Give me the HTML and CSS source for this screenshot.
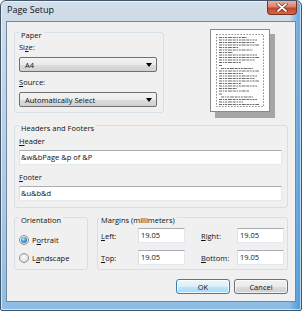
FILE: index.html
```html
<!DOCTYPE html>
<html lang="en">
<head>
  <meta charset="UTF-8" />
  <title>Page Setup</title>
  <link rel="stylesheet" href="styles.css">
</head>
<body>
  <div class="window">
    <div class="titlebar">
      <span class="title">Page Setup</span>
      <div class="close">
        <svg width="12" height="9" viewBox="0 0 12 9">
          <path d="M2 1 L10 8 M10 1 L2 8" stroke="#6b2a1d" stroke-width="3.2" stroke-linecap="round"/>
          <path d="M2 1 L10 8 M10 1 L2 8" stroke="#fff" stroke-width="1.7" stroke-linecap="round"/>
        </svg>
      </div>
    </div>

    <div class="client">
      <div class="top-row">
        <fieldset class="group paper">
          <legend>Paper</legend>
          <div class="field-label">Si<u>z</u>e:</div>
          <div class="combo">
            <span>A4</span>
            <svg width="6" height="4" viewBox="0 0 6 4"><path d="M0 0 H6 L3 4 Z" fill="#000"/></svg>
          </div>
          <div class="field-label"><u>S</u>ource:</div>
          <div class="combo">
            <span>Automatically Select</span>
            <svg width="6" height="4" viewBox="0 0 6 4"><path d="M0 0 H6 L3 4 Z" fill="#000"/></svg>
          </div>
        </fieldset>

        <div class="preview">
          <svg width="65" height="90" viewBox="0 0 65 90">
            <rect x="5" y="5" width="60" height="84" fill="#a6a6a6"/>
            <rect x="0.5" y="0.5" width="59" height="82" fill="#fff" stroke="#8a8a8a"/>
            <rect x="6.5" y="5.5" width="47" height="72" fill="none" stroke="#777" stroke-dasharray="1.3 1.7"/>
            <g stroke="#6a6a6a" stroke-width="1" stroke-dasharray="3 0.8 1.5 0.8 2 0.8 4 0.8">
              <path d="M9 8.5h28 M9 11h38 M9 13.5h36 M9 16h40 M9 18.5h20 M9 21h34 M9 23.5h14 M9 26h38 M9 28.5h40 M9 31h36 M9 33.5h22"/>
              <path d="M9 36.5h3"/>
              <path d="M11 39.5h32 M9 42h40 M9 44.5h24 M9 47h38 M9 49.5h36 M9 52h40 M9 54.5h22 M9 57h38 M9 59.5h18 M9 62h30"/>
              <path d="M9 65h3"/>
              <path d="M11 68h32 M9 70.5h38 M9 73h24 M9 75.5h40"/>
            </g>
          </svg>
        </div>
      </div>

      <fieldset class="group headers">
        <legend>Headers and Footers</legend>
        <div class="field-label"><u>H</u>eader</div>
        <div class="textbox wide">&amp;w&amp;bPage &amp;p of &amp;P</div>
        <div class="field-label footer-label"><u>F</u>ooter</div>
        <div class="textbox wide">&amp;u&amp;b&amp;d</div>
      </fieldset>

      <div class="bottom-row">
        <fieldset class="group orientation">
          <legend>Orientation</legend>
          <div class="radio-row first">
            <span class="radio checked"></span>
            <span>P<u>o</u>rtrait</span>
          </div>
          <div class="radio-row">
            <span class="radio"></span>
            <span>L<u>a</u>ndscape</span>
          </div>
        </fieldset>

        <fieldset class="group margins">
          <legend>Margins (millimeters)</legend>
          <div class="margin-grid">
            <span><u>L</u>eft:</span>
            <div class="textbox">19.05</div>
            <span><u>R</u>ight:</span>
            <div class="textbox">19.05</div>
            <span><u>T</u>op:</span>
            <div class="textbox">19.05</div>
            <span><u>B</u>ottom:</span>
            <div class="textbox">19.05</div>
          </div>
        </fieldset>
      </div>

      <div class="buttons">
        <button class="btn default">OK</button>
        <button class="btn">Cancel</button>
      </div>
    </div>
  </div>
</body>
</html>
```

FILE: styles.css
```css
body {
  margin: 0;
  font-family: "Open Sans", "Liberation Sans", sans-serif;
  font-size: 7.5px;
  color: #111;
}
u {
  text-decoration-thickness: 1px;
  text-underline-offset: 1px;
}
.window {
  width: 302px;
  height: 311px;
  box-sizing: border-box;
  border: 1px solid #42566b;
  border-radius: 6px 6px 2px 2px;
  background:
    linear-gradient(90deg, rgba(255,255,255,0) 96%, rgba(40,135,215,0.55) 99%),
    linear-gradient(180deg, #d2dee9 0, #c4d5e6 25%, #abc9e5 65%, #8cbde6 100%);
  box-shadow: inset 0 0 0 1px rgba(255,255,255,0.6);
  display: flex;
  flex-direction: column;
}
.titlebar {
  height: 20px;
  display: flex;
  justify-content: space-between;
  align-items: flex-start;
}
.title {
  font-size: 9px;
  line-height: 18px;
  padding-left: 6px;
  color: #111;
}
.close {
  width: 30px;
  height: 14px;
  margin-right: 4px;
  box-sizing: border-box;
  border: 1px solid #77301f;
  border-top: none;
  border-radius: 0 0 4px 4px;
  background: linear-gradient(180deg, #eab2a2 0, #d9826c 45%, #c3462a 55%, #d0674b 100%);
  display: flex;
  align-items: center;
  justify-content: center;
}
.client {
  margin: 0 5px 8px;
  flex: 1;
  background: #f0f0f0;
  border: 1px solid #71889f;
  padding: 6px 7px 0;
}

/* group boxes */
.group {
  margin: 0;
  min-width: 0;
  border: 1px solid #d5dfe5;
  border-radius: 3px;
  box-sizing: border-box;
}
.group legend {
  height: 9px;
  line-height: 14px;
  padding: 0 2px;
}
.field-label {
  height: 12px;
  line-height: 12px;
  margin-top: 4px;
}

.top-row {
  display: flex;
  align-items: flex-start;
}
.paper {
  width: 150px;
  padding: 0 6px 5px 4px;
}
.preview {
  margin-left: 46px;
  margin-top: 1px;
  height: 89px;
}
.preview svg {
  display: block;
}

.combo {
  margin-top: 4px;
  height: 15px;
  box-sizing: border-box;
  border: 1px solid #707070;
  border-radius: 2px;
  background: linear-gradient(180deg, #f3f3f3 0, #ebebeb 50%, #dddddd 51%, #d0d0d0 100%);
  display: flex;
  justify-content: space-between;
  align-items: center;
  padding: 0 4px 0 5px;
}

.headers {
  margin-top: 3px;
  padding: 0 5px 6px 4px;
}
.headers .field-label {
  margin-top: 5px;
}
.headers .footer-label {
  margin-top: 6px;
}
.textbox {
  height: 15px;
  box-sizing: border-box;
  background: #fff;
  border: 1px solid #e3e9ef;
  border-top-color: #abadb3;
  border-left-color: #dbdfe6;
  line-height: 13px;
  padding-left: 2px;
}
.textbox.wide {
  margin-top: 3px;
  padding-left: 1px;
}

.bottom-row {
  margin-top: 5px;
  display: flex;
  gap: 9px;
}
.orientation {
  width: 74px;
  padding: 0 4px 5px 4px;
}
.radio-row {
  height: 12px;
  margin-top: 6px;
  display: flex;
  align-items: center;
  gap: 3px;
}
.radio-row.first {
  margin-top: 12px;
}
.radio {
  width: 10px;
  height: 10px;
  box-sizing: border-box;
  border-radius: 50%;
  border: 1px solid #8f9090;
  background: radial-gradient(circle at 50% 40%, #fbfbfb, #d6d6d6);
  display: flex;
  align-items: center;
  justify-content: center;
}
.radio.checked::after {
  content: "";
  width: 6px;
  height: 6px;
  border-radius: 50%;
  background: radial-gradient(circle at 40% 35%, #b8ecff 0, #3c9be0 45%, #0f4d98 100%);
}
.margins {
  flex: 1;
  padding: 0 4px 4px 3px;
}
.margins legend {
  margin-left: -2px;
}
.margin-grid {
  margin-top: 6px;
  display: grid;
  grid-template-columns: 37px 47px 16px 36px 47px;
  grid-auto-rows: 15px;
  row-gap: 7px;
  align-items: center;
}
.margin-grid span:nth-child(3),
.margin-grid span:nth-child(7) {
  grid-column: 4;
}

.buttons {
  margin-top: 9px;
  display: flex;
  justify-content: flex-end;
  gap: 4px;
}
.btn {
  width: 54px;
  height: 15px;
  padding: 0;
  font: inherit;
  color: #111;
  border: 1px solid #707070;
  border-radius: 3px;
  background: linear-gradient(180deg, #f2f2f2 0, #ebebeb 50%, #dddddd 51%, #cfcfcf 100%);
  box-shadow: inset 0 0 0 1px rgba(255,255,255,0.7);
}
.btn.default {
  border-color: #3c7fb1;
  background: linear-gradient(180deg, #eaf6fd 0, #d9f0fc 50%, #bee6fd 51%, #a7d9f5 100%);
  box-shadow: inset 0 0 0 1px rgba(255,255,255,0.8);
}
```
